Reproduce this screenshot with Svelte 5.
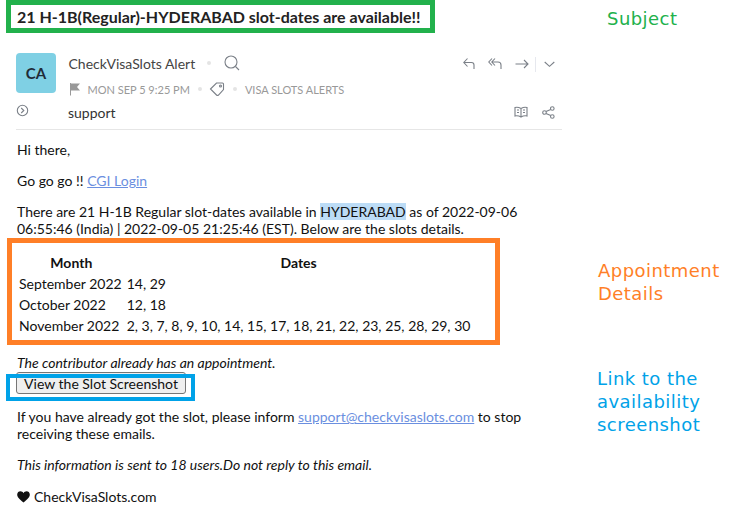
<script>
  const rows = [
    ['September 2022', '14, 29'],
    ['October 2022', '12, 18'],
    ['November 2022', '2, 3, 7, 8, 9, 10, 14, 15, 17, 18, 21, 22, 23, 25, 28, 29, 30']
  ];
</script>

<div class="page">
  <h1 class="subject">21 H-1B(Regular)-HYDERABAD slot-dates are available!!</h1>

  <header class="head">
    <div class="avatar">CA</div>
    <div class="meta">
      <div class="sender">
        <span>CheckVisaSlots Alert</span>
        <i class="dot"></i>
        <svg class="ic" width="18" height="18" viewBox="0 0 18 18"><circle cx="8" cy="8" r="6" /><path d="M12.500 12.500 16 16" /></svg>
      </div>
      <div class="info">
        <svg class="flag" width="12" height="14" viewBox="0 0 12 14"><path d="M1.500 1v12.500" /><path class="fill" d="M2 1.500h9L8 5l3 3.500H2z" /></svg>
        <span>MON SEP 5 9:25 PM</span>
        <i class="dot"></i>
        <svg class="ic tag" width="16" height="16" viewBox="0 0 16 16"><path d="M1.500 8 7.500 2H13.500Q14.500 2 14.500 3V8.500L9.500 14Q8.500 15 7.500 14z" /><circle cx="11.500" cy="5" r="1" /></svg>
        <i class="dot"></i>
        <span>VISA SLOTS ALERTS</span>
      </div>
    </div>
    <div class="actions">
      <svg class="ic" width="12" height="14" viewBox="0 0 12 14"><path d="M4.500 1.500 .8 5.500 4.500 9.500M.8 5.500H8.500Q11 5.500 11 8v4" /></svg>
      <svg class="ic" width="14" height="14" viewBox="0 0 14 14"><path d="M4 1.500 .8 5 4 8.500M7 1.500 3.800 5 7 8.500M3.800 5H10Q13 5 13 8v4" /></svg>
      <svg class="ic" width="14" height="14" viewBox="0 0 14 14"><path d="M.5 7H13M9 3l4 4-4 4" /></svg>
      <i class="sep"></i>
      <svg class="ic down" width="11" height="14" viewBox="0 0 11 14"><path d="M.7 5 5.500 9.300 10.300 5" /></svg>
    </div>
  </header>

  <div class="recipients">
    <svg class="ic expand" width="13" height="13" viewBox="0 0 13 13"><circle cx="6.500" cy="6.500" r="5.200" /><path d="M5.200 4 7.800 6.500 5.200 9" /></svg>
    <span class="to">support</span>
    <div class="tools">
      <svg class="ic book" width="14" height="12" viewBox="0 0 14 12"><path d="M7 2.500Q4 .8 1 1.500v8.500q3-.7 6 1 3-1.700 6-1V1.500Q10 .8 7 2.500zM7 2.500V11M3 4h2M3 6.500h2M9 4h2M9 6.500h2" /></svg>
      <svg class="ic" width="13" height="13" viewBox="0 0 13 13"><circle cx="2.500" cy="6.500" r="1.800" /><circle cx="10.300" cy="2.500" r="1.800" /><circle cx="10.300" cy="10.500" r="1.800" /><path d="M4 5.600 8.700 3.400M4 7.400l4.700 2.200" /></svg>
    </div>
  </div>

  <main class="body">
    <p>Hi there,</p>
    <p>Go go go !! <a href="#cgi">CGI Login</a></p>
    <p class="tight">There are 21 H-1B Regular slot-dates available in <mark>HYDERABAD</mark> as of 2022-09-06 06:55:46 (India) | 2022-09-05 21:25:46 (EST). Below are the slots details.</p>
    <table>
      <thead><tr><th>Month</th><th>Dates</th></tr></thead>
      <tbody>
        {#each rows as r}
          <tr><td>{r[0]}</td><td>{r[1]}</td></tr>
        {/each}
      </tbody>
    </table>
    <p class="note"><em>The contributor already has an appointment.</em></p>
    <button type="button">View the Slot Screenshot</button>
    <p class="tight inform">If you have already got the slot, please inform <a href="#mail">support@checkvisaslots.com</a> to stop receiving these emails.</p>
    <p class="sent"><em>This information is sent to 18 users.Do not reply to this email.</em></p>
    <p class="sign">
      <svg class="heart" width="13" height="12" viewBox="0 0 13 12"><path d="M6.500 11.500C2 8 .2 6 .2 3.600.2 1.500 1.800.3 3.400.3 4.800.3 5.900 1 6.500 2.200 7.100 1 8.200.3 9.600.3c1.600 0 3.200 1.200 3.200 3.300C12.800 6 11 8 6.500 11.500z" /></svg>
      <span>CheckVisaSlots.com</span>
    </p>
  </main>

  <div class="box green"></div>
  <div class="box orange"></div>
  <div class="box blue"></div>
  <div class="label subj">Subject</div>
  <div class="label appt">Appointment<br />Details</div>
  <div class="label link">Link to the<br />availability<br />screenshot</div>
</div>

<style>
  :global(body) { margin: 0; background: #fff; }
  .page {
    position: relative;
    width: 732px;
    height: 518px;
    overflow: hidden;
    box-sizing: border-box;
    padding: 0 0 0 17px;
    font-family: Lato, sans-serif;
    font-size: 14px;
    color: #111;
    background: #fff;
  }
  .subject {
    margin: 0;
    padding-top: 7px;
    font-size: 16px;
    line-height: 19px;
    font-weight: 700;
    color: #222;
  }
  .head {
    display: flex;
    width: 545px;
    margin-top: 27px;
    margin-left: -1px;
  }
  .avatar {
    width: 40px;
    height: 40px;
    flex: none;
    display: flex;
    align-items: center;
    justify-content: center;
    border-radius: 4px;
    background: #7fd0e4;
    color: #1f2c38;
    font-size: 15px;
    font-weight: 700;
  }
  .meta { margin-left: 12.500px; }
  .sender {
    display: flex;
    align-items: center;
    height: 20px;
    color: #444;
    font-size: 14px;
  }
  .sender .dot { margin: 0 12px; }
  .info {
    display: flex;
    align-items: center;
    height: 18px;
    margin-top: 7px;
    color: #999;
    font-size: 11px;
  }
  .info .flag { margin-right: 7px; }
  .info .dot { margin: 0 8px; }
  .info .tag { margin-left: -1px; }
  .dot {
    width: 4px;
    height: 4px;
    border-radius: 50%;
    background: #e4e4e4;
  }
  svg { display: block; flex: none; }
  .ic { fill: none; stroke: #7b8088; stroke-width: 1.100; }
  .flag path { fill: none; stroke: #999; stroke-width: 1; }
  .flag .fill { fill: #999; stroke: none; }
  .actions {
    display: flex;
    align-items: center;
    gap: 13px;
    height: 16px;
    margin-left: auto;
    margin-top: 3px;
    margin-right: 6px;
  }
  .sep { width: 1px; height: 15px; background: #e6e8ee; margin: 0 -5px 0 -7px; }
  .recipients {
    display: flex;
    align-items: center;
    width: 545px;
    height: 20px;
    margin-top: 4px;
  }
  .expand { margin-left: -1px; margin-top: -4px; }
  .to { margin-left: 39px; color: #333; }
  .tools { display: flex; align-items: center; gap: 14px; margin-left: auto; margin-right: 7px; }
  .body {
    margin-top: 7px;
    width: 545px;
    border-top: 1px solid #e6e6e6;
    margin-left: -1px;
    padding-left: 1px;
    padding-top: 11px;
  }
  p { margin: 0 0 14px; line-height: 17px; }
  mark { background: #bcdcf6; color: inherit; }
  a { color: #6b8fe0; text-decoration: underline; }
  table { border-spacing: 2px; }
  th { font-weight: 700; padding: 1px; line-height: 17px; }
  td { padding: 1px; line-height: 17px; }
  td:first-child { padding: 1px 2px 1px 0; }
  .note { margin: 17px 0 0; line-height: 18px; }
  button {
    display: block;
    width: 170px;
    height: 22px;
    margin-left: -1px;
    padding: 0;
    font: inherit;
    line-height: 17px;
    color: #111;
    background: #efefef;
    border: 1px solid #767676;
    border-radius: 3px;
  }
  .inform { margin-top: 14px; }
  .sent { margin-bottom: 15px; }
  .sign { display: flex; align-items: center; gap: 4px; }
  .heart { fill: #111; }
  .box { position: absolute; box-sizing: border-box; }
  .green { left: 6px; top: 0; width: 429px; height: 33px; border: 5px solid #22b14c; }
  .orange { left: 7px; top: 238px; width: 493px; height: 107px; border: 5px solid #ff7f27; }
  .blue { left: 6px; top: 374px; width: 189px; height: 27px; border: 4px solid #00a2e8; }
  .label {
    position: absolute;
    font-family: "DejaVu Sans", sans-serif;
    font-size: 18px;
    line-height: 23px;
    letter-spacing: 0.450px;
  }
  .subj { left: 607px; top: 7px; color: #22b14c; }
  .appt { left: 598px; top: 259px; color: #ff7f27; }
  .link { left: 597px; top: 367px; color: #00a2e8; }
</style>
